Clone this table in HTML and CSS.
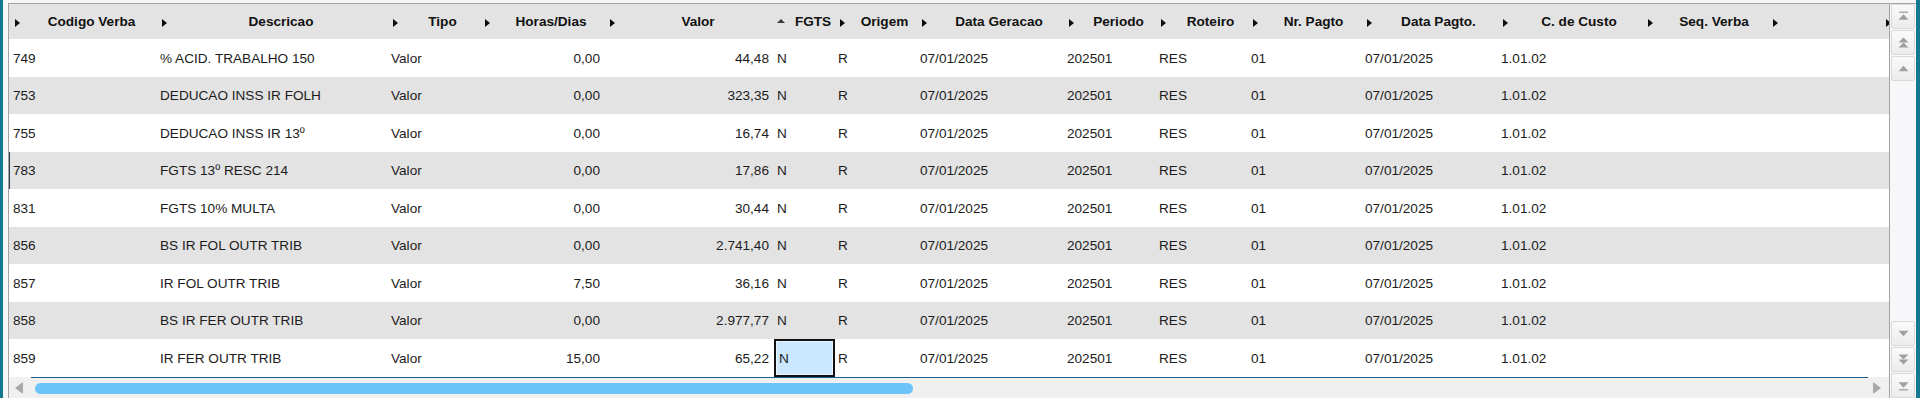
FILE: index.html
```html
<!DOCTYPE html>
<html lang="pt">
<head>
<meta charset="utf-8">
<title>Verbas</title>
<link rel="stylesheet" href="styles.css">
</head>
<body>
<div class="frame">
  <div class="teal-l"></div>
  <div class="gap-l"></div>
  <div class="panel">
    <div class="grid">
      <div class="grid-body">
        <table class="tbl">
          <colgroup>
            <col style="width:148px"><col style="width:231px"><col style="width:92px"><col style="width:125px">
            <col style="width:169px"><col style="width:61px"><col style="width:82px"><col style="width:147px">
            <col style="width:92px"><col style="width:92px"><col style="width:114px"><col style="width:136px">
            <col style="width:145px"><col style="width:125px"><col style="width:113px"><col style="width:120px">
          </colgroup>
          <thead>
            <tr>
              <th class="c1"><div class="h"><svg class="ti" viewBox="0 0 5 8"><path d="M0 0L5 4L0 8Z"/></svg><span>Codigo Verba</span></div></th>
              <th><div class="h"><svg class="ti" viewBox="0 0 5 8"><path d="M0 0L5 4L0 8Z"/></svg><span>Descricao</span></div></th>
              <th><div class="h"><svg class="ti" viewBox="0 0 5 8"><path d="M0 0L5 4L0 8Z"/></svg><span>Tipo</span></div></th>
              <th><div class="h"><svg class="ti" viewBox="0 0 5 8"><path d="M0 0L5 4L0 8Z"/></svg><span>Horas/Dias</span></div></th>
              <th><div class="h"><svg class="ti" viewBox="0 0 5 8"><path d="M0 0L5 4L0 8Z"/></svg><span>Valor</span></div></th>
              <th><div class="h hs"><svg class="si" viewBox="0 0 8 4"><path d="M0 4L4 0L8 4Z"/></svg><span>FGTS</span></div></th>
              <th><div class="h"><svg class="ti" viewBox="0 0 5 8"><path d="M0 0L5 4L0 8Z"/></svg><span>Origem</span></div></th>
              <th><div class="h"><svg class="ti" viewBox="0 0 5 8"><path d="M0 0L5 4L0 8Z"/></svg><span>Data Geracao</span></div></th>
              <th><div class="h"><svg class="ti" viewBox="0 0 5 8"><path d="M0 0L5 4L0 8Z"/></svg><span>Periodo</span></div></th>
              <th><div class="h"><svg class="ti" viewBox="0 0 5 8"><path d="M0 0L5 4L0 8Z"/></svg><span>Roteiro</span></div></th>
              <th><div class="h"><svg class="ti" viewBox="0 0 5 8"><path d="M0 0L5 4L0 8Z"/></svg><span>Nr. Pagto</span></div></th>
              <th><div class="h"><svg class="ti" viewBox="0 0 5 8"><path d="M0 0L5 4L0 8Z"/></svg><span>Data Pagto.</span></div></th>
              <th><div class="h"><svg class="ti" viewBox="0 0 5 8"><path d="M0 0L5 4L0 8Z"/></svg><span>C. de Custo</span></div></th>
              <th><div class="h"><svg class="ti" viewBox="0 0 5 8"><path d="M0 0L5 4L0 8Z"/></svg><span>Seq. Verba</span></div></th>
              <th><div class="h"><svg class="ti" viewBox="0 0 5 8"><path d="M0 0L5 4L0 8Z"/></svg><span></span></div></th>
              <th><div class="h"><svg class="ti" viewBox="0 0 5 8"><path d="M0 0L5 4L0 8Z"/></svg><span></span></div></th>
            </tr>
          </thead>
          <tbody>
            <tr><td class="c1">749</td><td>% ACID. TRABALHO 150</td><td>Valor</td><td class="num">0,00</td><td class="num">44,48</td><td>N</td><td>R</td><td>07/01/2025</td><td>202501</td><td>RES</td><td>01</td><td>07/01/2025</td><td>1.01.02</td><td></td><td></td><td></td></tr>
            <tr><td class="c1">753</td><td>DEDUCAO INSS IR FOLH</td><td>Valor</td><td class="num">0,00</td><td class="num">323,35</td><td>N</td><td>R</td><td>07/01/2025</td><td>202501</td><td>RES</td><td>01</td><td>07/01/2025</td><td>1.01.02</td><td></td><td></td><td></td></tr>
            <tr><td class="c1">755</td><td>DEDUCAO INSS IR 13º</td><td>Valor</td><td class="num">0,00</td><td class="num">16,74</td><td>N</td><td>R</td><td>07/01/2025</td><td>202501</td><td>RES</td><td>01</td><td>07/01/2025</td><td>1.01.02</td><td></td><td></td><td></td></tr>
            <tr class="marked"><td class="c1">783</td><td>FGTS 13º RESC 214</td><td>Valor</td><td class="num">0,00</td><td class="num">17,86</td><td>N</td><td>R</td><td>07/01/2025</td><td>202501</td><td>RES</td><td>01</td><td>07/01/2025</td><td>1.01.02</td><td></td><td></td><td></td></tr>
            <tr><td class="c1">831</td><td>FGTS 10% MULTA</td><td>Valor</td><td class="num">0,00</td><td class="num">30,44</td><td>N</td><td>R</td><td>07/01/2025</td><td>202501</td><td>RES</td><td>01</td><td>07/01/2025</td><td>1.01.02</td><td></td><td></td><td></td></tr>
            <tr><td class="c1">856</td><td>BS IR FOL OUTR TRIB</td><td>Valor</td><td class="num">0,00</td><td class="num">2.741,40</td><td>N</td><td>R</td><td>07/01/2025</td><td>202501</td><td>RES</td><td>01</td><td>07/01/2025</td><td>1.01.02</td><td></td><td></td><td></td></tr>
            <tr><td class="c1">857</td><td>IR FOL OUTR TRIB</td><td>Valor</td><td class="num">7,50</td><td class="num">36,16</td><td>N</td><td>R</td><td>07/01/2025</td><td>202501</td><td>RES</td><td>01</td><td>07/01/2025</td><td>1.01.02</td><td></td><td></td><td></td></tr>
            <tr><td class="c1">858</td><td>BS IR FER OUTR TRIB</td><td>Valor</td><td class="num">0,00</td><td class="num">2.977,77</td><td>N</td><td>R</td><td>07/01/2025</td><td>202501</td><td>RES</td><td>01</td><td>07/01/2025</td><td>1.01.02</td><td></td><td></td><td></td></tr>
            <tr><td class="c1">859</td><td>IR FER OUTR TRIB</td><td>Valor</td><td class="num">15,00</td><td class="num">65,22</td><td class="sel">N</td><td>R</td><td>07/01/2025</td><td>202501</td><td>RES</td><td>01</td><td>07/01/2025</td><td>1.01.02</td><td></td><td></td><td></td></tr>
          </tbody>
        </table>
      </div>
      <div class="hscroll">
        <div class="hline"></div>
        <div class="hbar">
          <svg class="harrow" viewBox="0 0 8 12"><path d="M8 0L0 6L8 12Z"/></svg>
          <div class="hthumb"></div>
          <div class="hspace"></div>
          <svg class="harrow" viewBox="0 0 8 12"><path d="M0 0L8 6L0 12Z"/></svg>
        </div>
      </div>
    </div>
    <div class="vscroll">
      <div class="vgroup">
        <div class="vbtn"><svg viewBox="0 0 10 10"><rect x="1" y="0.5" width="8" height="1.2"/><path d="M5 3L9.5 8H0.5Z"/></svg></div>
        <div class="vbtn"><svg viewBox="0 0 10 10"><path d="M5 0.5L9.5 5H0.5Z"/><path d="M5 5L9.5 9.5H0.5Z"/></svg></div>
        <div class="vbtn"><svg viewBox="0 0 10 10"><path d="M5 2.5L9.5 7.5H0.5Z"/></svg></div>
      </div>
      <div class="vgroup">
        <div class="vbtn"><svg viewBox="0 0 10 10"><path d="M0.5 2.5H9.5L5 7.5Z"/></svg></div>
        <div class="vbtn"><svg viewBox="0 0 10 10"><path d="M0.5 0.5H9.5L5 5Z"/><path d="M0.5 5H9.5L5 9.5Z"/></svg></div>
        <div class="vbtn"><svg viewBox="0 0 10 10"><path d="M0.5 2H9.5L5 7Z"/><rect x="1" y="8.3" width="8" height="1.2"/></svg></div>
      </div>
    </div>
  </div>
  <div class="teal-r"></div>
</div>
</body>
</html>
```

FILE: styles.css
```css
html, body {
  margin: 0;
  padding: 0;
  background: #f6f7f9;
}

body {
  font-family: "Liberation Sans", Arial, sans-serif;
  font-size: 13.6px;
  color: #1c1c1c;
  overflow: hidden;
}

.frame {
  display: flex;
  width: 1920px;
  height: 398px;
}

.teal-l {
  width: 3px;
  background: #14798f;
}

.teal-r {
  width: 4px;
  background: #14798f;
}

.gap-l {
  width: 5px;
  background: #f6f7f9;
}

.panel {
  display: flex;
  margin-top: 3px;
  border-top: 1px solid #a3a3a3;
  border-left: 1px solid #a3a3a3;
  height: 394px;
}

.grid {
  width: 1880px;
  display: flex;
  flex-direction: column;
  background: #ffffff;
}

.grid-body {
  flex: 1;
  overflow: hidden;
}

.tbl {
  table-layout: fixed;
  border-collapse: collapse;
  border-spacing: 0;
  width: 1992px;
}

.tbl th {
  height: 35px;
  padding: 0;
  background: #e3e3e3;
  font-weight: bold;
  color: #111;
  text-align: center;
  white-space: nowrap;
  overflow: hidden;
}

.h {
  display: flex;
  align-items: center;
  height: 35px;
}

.ti {
  width: 5px;
  height: 8px;
  margin-left: 5px;
  margin-right: 7px;
  margin-top: 3px;
  flex: none;
  fill: #0c0c0c;
}

.c1 .ti {
  margin-left: 6px;
  margin-right: 6px;
}

.si {
  width: 8px;
  height: 4px;
  margin-left: 3px;
  margin-right: 6px;
  margin-top: -1px;
  flex: none;
  fill: #3a3a3a;
}

.h span {
  flex: 1;
  text-align: center;
}

.tbl td {
  padding: 0 0 0 3px;
  white-space: nowrap;
  overflow: hidden;
  vertical-align: middle;
}

.tbl td.c1 {
  padding-left: 4px;
}

.tbl td.num {
  text-align: right;
  padding: 0 5px 0 0;
}

.tbl tbody tr:nth-child(odd) {
  height: 38px;
  background: #ffffff;
}

.tbl tbody tr:nth-child(even) {
  height: 37px;
  background: #e3e3e3;
}

.tbl tr.marked td.c1 {
  box-shadow: inset 1px 0 0 #2c3e50;
}

.tbl td.sel {
  background: #cce8ff;
  box-shadow: inset 0 0 0 2px #111111, inset 0 0 0 3px #e9f4ff;
  padding-left: 5px;
}

.hscroll {
  height: 21px;
  display: flex;
  flex-direction: column;
  background: #f0f0f0;
}

.hline {
  height: 1px;
  margin: 0 21px 0 22px;
  background: #185f92;
}

.hbar {
  height: 20px;
  display: flex;
  align-items: center;
  padding: 0 8px 0 6px;
}

.harrow {
  width: 8px;
  height: 12px;
  fill: #a9a9a9;
  flex: none;
}

.hthumb {
  width: 878px;
  height: 11px;
  margin-left: 12px;
  border-radius: 6px;
  background: #6cc4f9;
  flex: none;
}

.hspace {
  flex: 1;
}

.vscroll {
  width: 26px;
  border-left: 1px solid #a3a3a3;
  background: #f7f7f9;
  display: flex;
  flex-direction: column;
  justify-content: space-between;
}

.vgroup {
  display: flex;
  flex-direction: column;
  gap: 1px;
}

.vbtn {
  width: 22px;
  height: 23px;
  margin-left: 1px;
  border: 1px solid #dadada;
  border-radius: 2px;
  background: linear-gradient(#fafafa, #ececec);
  display: flex;
  align-items: center;
  justify-content: center;
}

.vbtn svg {
  width: 11px;
  height: 11px;
  fill: #a0a0a0;
}
```
